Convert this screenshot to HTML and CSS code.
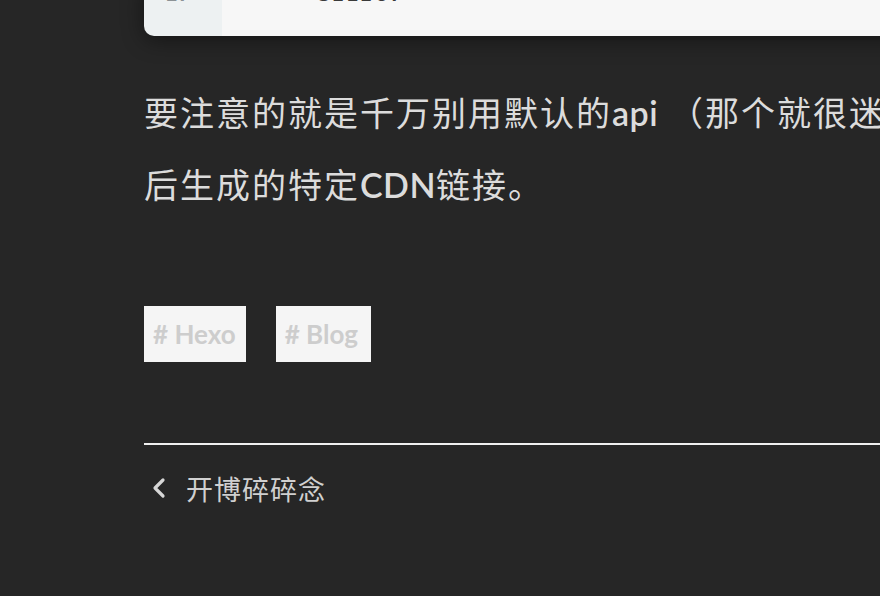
FILE: index.html
```html
<!DOCTYPE html>
<html lang="zh-CN">
<head>
<meta charset="utf-8">
<title>开博碎碎念</title>
<link rel="stylesheet" href="styles.css">
</head>
<body>
<main class="article">
  <figure class="code">
    <div class="gutter">27</div>
    <div class="code-body">SELECT</div>
  </figure>
  <p class="para">要注意的就是千万别用默认的<span class="lat">api</span> （那个就很迷），用原本的链接然<br>后生成的特定<span class="lat">CDN</span>链接。</p>
  <div class="tags">
    <a class="tag"># Hexo</a>
    <a class="tag"># Blog</a>
  </div>
  <hr class="rule">
  <nav class="post-nav">
    <svg class="chev" width="14" height="22" viewBox="0 0 14 22"><path d="M11 3 L3 11 L11 19" fill="none" stroke="#d6d6d6" stroke-width="3.2" stroke-linecap="round" stroke-linejoin="round"/></svg>
    <span class="prev">开博碎碎念</span>
  </nav>
</main>
</body>
</html>
```

FILE: styles.css
```css
html, body {
  margin: 0;
  padding: 0;
  background: #262626;
  overflow: hidden;
}
body {
  width: 880px;
  height: 596px;
  font-family: Lato, "Noto Sans CJK SC", sans-serif;
  color: #dcdcdc;
}
.article {
  width: 1100px;
  margin-left: 144px;
}
.code {
  margin: -18px 0 0 0;
  display: flex;
  border-radius: 0 0 10px 10px;
  overflow: hidden;
  box-shadow: 0 4px 22px rgba(0,0,0,0.45);
  font-family: "DejaVu Sans Mono", monospace;
  font-size: 20px;
  line-height: 24px;
  font-weight: bold;
}
.gutter {
  width: 78px;
  flex: none;
  background: #edf1f2;
  color: #8c9296;
  padding: 0 0 30px 22px;
  box-sizing: border-box;
}
.code-body {
  flex: 1;
  background: #f7f7f7;
  color: #3a3a3a;
  padding: 0 0 30px 96px;
  letter-spacing: 2px;
}
.para {
  margin: 41px 0 0 0;
  font-size: 34px;
  letter-spacing: 2px;
  line-height: 72px;
  white-space: nowrap;
}
.lat {
  font-weight: 600;
  letter-spacing: 0.5px;
}
.tags {
  margin-top: 85px;
  display: flex;
  gap: 30px;
}
.tag {
  display: block;
  height: 56px;
  line-height: 56px;
  padding: 0 10px 0 9px;
  background: #f5f5f5;
  color: #cdcdcd;
  font-size: 26px;
  font-weight: bold;
}
.tag + .tag {
  padding-right: 13px;
}
.rule {
  margin: 81px 0 0 0;
  border: 0;
  height: 2px;
  background: #efefef;
}
.post-nav {
  margin-top: 28px;
  display: flex;
  align-items: center;
  height: 30px;
  padding-left: 8px;
}
.chev {
  display: block;
}
.prev {
  margin-left: 20px;
  font-size: 27px;
  letter-spacing: 1px;
  color: #d0d0d0;
}
```
